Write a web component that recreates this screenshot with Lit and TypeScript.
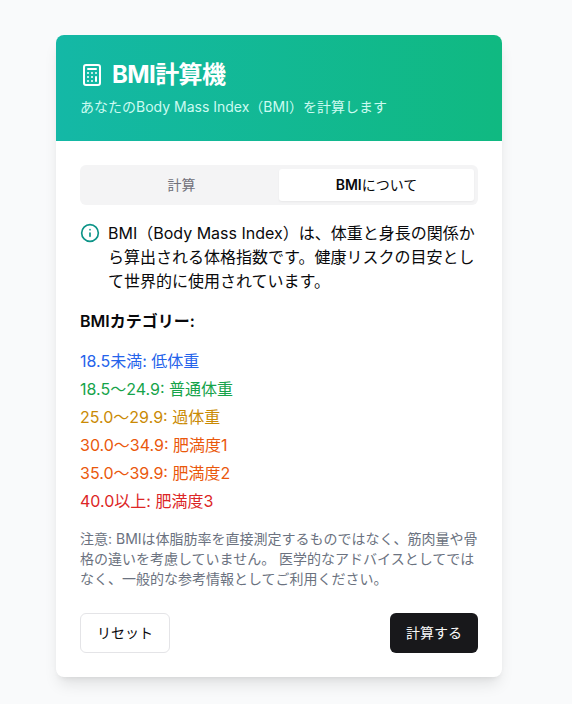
import { LitElement, html, css } from "lit";
import { customElement } from "lit/decorators.js";

const cats: [string, string][] = [
  ["18.5未満: 低体重", "blue"],
  ["18.5～24.9: 普通体重", "green"],
  ["25.0～29.9: 過体重", "yellow"],
  ["30.0～34.9: 肥満度1", "orange"],
  ["35.0～39.9: 肥満度2", "orange"],
  ["40.0以上: 肥満度3", "red"],
];

@customElement("app-root")
export class AppRoot extends LitElement {
  static styles = css`
    :host {
      display: block;
      min-height: 704px;
      background: #f9fafb;
      font: 16px/24px Inter, "Noto Sans CJK JP", sans-serif;
      color: #09090b;
      box-sizing: border-box;
      padding: 35px 70px 27px 56px;
    }
    * { box-sizing: border-box; }
    .card {
      width: 446px;
      background: #fff;
      border-radius: 8px;
      overflow: hidden;
      box-shadow: 0 10px 15px -3px rgba(0,0,0,.1), 0 4px 6px -4px rgba(0,0,0,.1);
    }
    .head {
      height: 106px;
      padding: 24px;
      background: linear-gradient(to right, #14b8a6, #10b981);
      color: #fff;
    }
    .title {
      display: flex;
      align-items: center;
      gap: 8px;
      font-size: 24px;
      line-height: 32px;
      font-weight: 700;
      letter-spacing: -0.6px;
      margin: 0;
    }
    .title svg { width: 24px; height: 24px; }
    .sub { font-size: 14px; line-height: 20px; color: #ccfbf1; margin: 6px 0 0; }
    .body { padding: 24px; }
    .tabs {
      display: grid;
      grid-template-columns: 1fr 1fr;
      height: 40px;
      padding: 4px;
      background: #f4f4f5;
      border-radius: 6px;
      margin-bottom: 16px;
    }
    .tab {
      display: flex;
      align-items: center;
      justify-content: center;
      font-size: 14px;
      font-weight: 400;
      color: #71717a;
      border-radius: 3px;
    }
    .tab.on { background: #fff; color: #09090b; box-shadow: 0 1px 2px rgba(0,0,0,.05); }
    .tab b { font-weight: 600; }
    .info { display: flex; gap: 8px; font-size: 16px; line-height: 24px; }
    .info svg { width: 20px; height: 20px; flex: none; margin-top: 2px; color: #0d9488; }
    .info p { margin: 0; min-width: 0; flex: 1; }
    .info span { display: block; }
    h3 { margin: 16px 0 0; font-size: 16px; line-height: 24px; font-weight: 600; }
    ul { list-style: none; margin: 16px 0 0; padding: 0; display: flex; flex-direction: column; gap: 4px; }
    li { font-size: 16px; line-height: 24px; }
    .blue { color: #2563eb; }
    .green { color: #16a34a; }
    .yellow { color: #ca8a04; }
    .orange { color: #ea580c; }
    .red { color: #dc2626; }
    .note { margin: 16px 0 0; font-size: 14px; line-height: 20px; color: #6b7280; }
    .foot { display: flex; justify-content: space-between; margin-top: 24px; }
    button {
      height: 40px;
      padding: 0 16px;
      font: 400 14px/20px Inter, "Noto Sans CJK JP", sans-serif;
      border-radius: 6px;
      border: 1px solid #e4e4e7;
      background: #fff;
      color: #09090b;
    }
    button.main { background: #18181b; border: none; color: #fafafa; }
  `;

  render() {
    return html`
      <div class="card">
        <div class="head">
          <h1 class="title">
            <svg viewBox="0 0 24 24" fill="none" stroke="currentColor" stroke-width="2" stroke-linecap="round" stroke-linejoin="round">
              <rect width="16" height="20" x="4" y="2" rx="2"></rect>
              <line x1="8" x2="16" y1="6" y2="6"></line>
              <line x1="16" x2="16" y1="14" y2="18"></line>
              <path d="M16 10h.01"></path><path d="M12 10h.01"></path><path d="M8 10h.01"></path>
              <path d="M12 14h.01"></path><path d="M8 14h.01"></path><path d="M12 18h.01"></path><path d="M8 18h.01"></path>
            </svg>
            BMI計算機
          </h1>
          <p class="sub">あなたのBody Mass Index（BMI）を計算します</p>
        </div>
        <div class="body">
          <div class="tabs">
            <div class="tab">計算</div>
            <div class="tab on"><div><b>BMI</b>について</div></div>
          </div>
          <div class="info">
            <svg viewBox="0 0 24 24" fill="none" stroke="currentColor" stroke-width="2" stroke-linecap="round" stroke-linejoin="round">
              <circle cx="12" cy="12" r="10"></circle>
              <path d="M12 16v-4"></path><path d="M12 8h.01"></path>
            </svg>
            <p><span>BMI（Body Mass Index）は、体重と身長の関係か</span><span>ら算出される体格指数です。健康リスクの目安として世界的に使用されています。</span></p>
          </div>
          <h3>BMIカテゴリー:</h3>
          <ul>${cats.map(([t, c]) => html`<li class=${c}>${t}</li>`)}</ul>
          <p class="note">注意: BMIは体脂肪率を直接測定するものではなく、筋肉量や骨格の違いを考慮していません。 医学的なアドバイスとしてではなく、一般的な参考情報としてご利用ください。</p>
          <div class="foot">
            <button>リセット</button>
            <button class="main">計算する</button>
          </div>
        </div>
      </div>
    `;
  }
}
